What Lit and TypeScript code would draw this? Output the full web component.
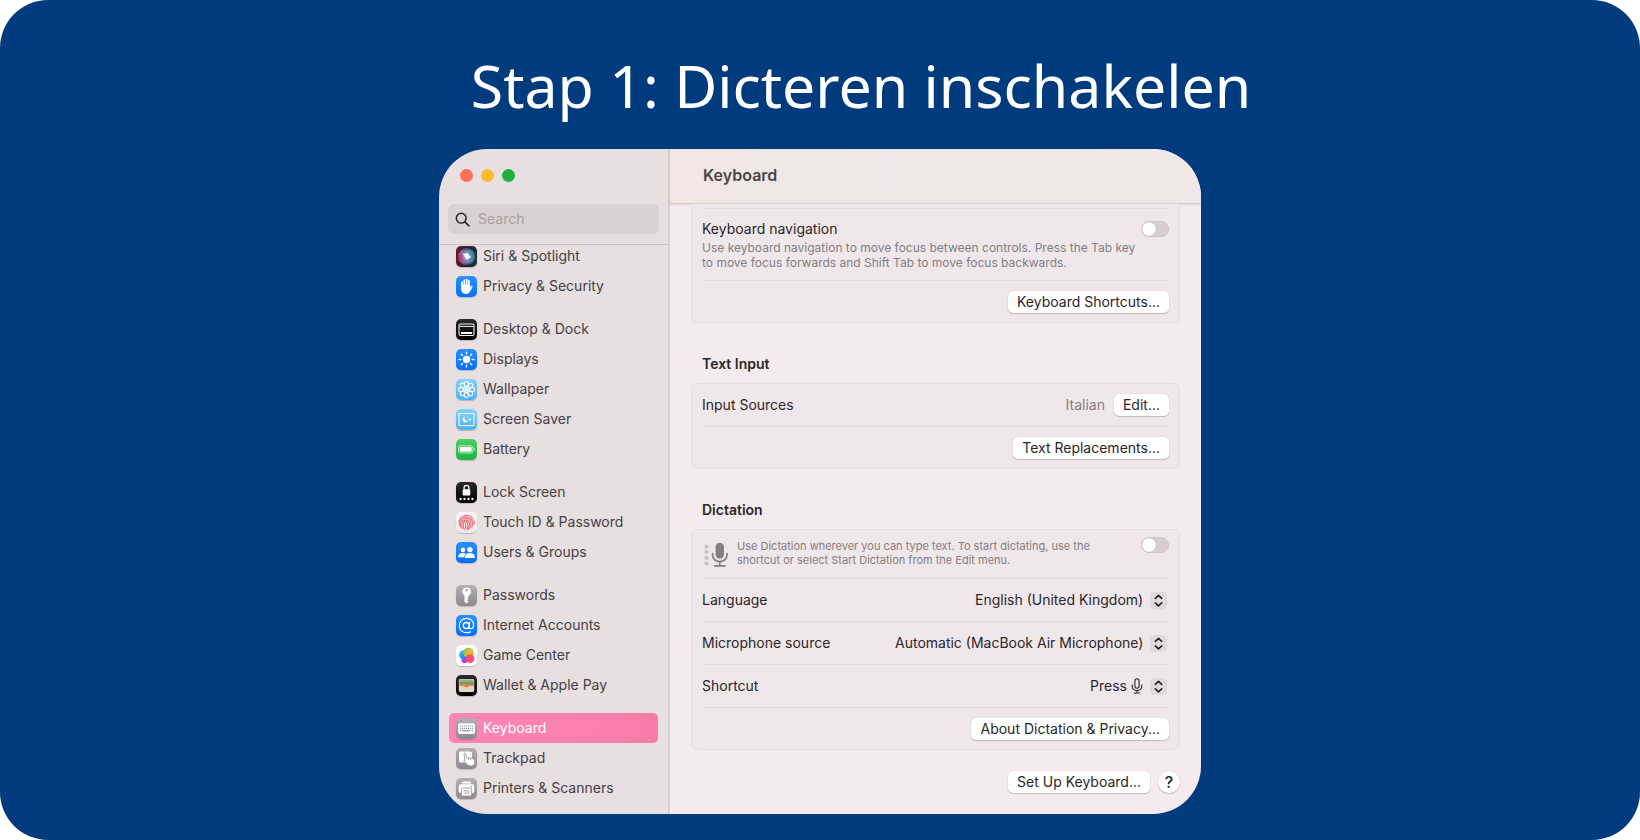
import { LitElement, html, css, svg, nothing } from "lit";
import type { TemplateResult } from "lit";
import { customElement, property, state } from "lit/decorators.js";
import { classMap } from "lit/directives/class-map.js";

type Glyph = TemplateResult;

const petals = [0, 45, 90, 135, 180, 225, 270, 315];
const keyColumns = [0, 1, 2, 3, 4, 5, 6];

const glyphs: Record<string, Glyph> = {
  siri: svg`
    <defs>
      <radialGradient id="orb"><stop offset="0" stop-color="#fff"/><stop offset=".25" stop-color="#b9d6ee"/><stop offset=".6" stop-color="#3b8fac"/><stop offset="1" stop-color="#1d4360"/></radialGradient>
      <linearGradient id="orbTint" x1="0" x2="1" y1=".5" y2=".3"><stop offset="0" stop-color="#e0245f" stop-opacity=".95"/><stop offset=".5" stop-color="#c85aa8" stop-opacity=".2"/><stop offset="1" stop-color="#17a08c" stop-opacity=".7"/></linearGradient>
    </defs>
    <circle cx="10.5" cy="10.5" r="8.6" fill="url(#orb)"/>
    <circle cx="10.5" cy="10.5" r="8.6" fill="url(#orbTint)"/>
    <path d="M3 9c3-4 8-5 14-2M4 14c4 3 9 3 13-1" fill="none" stroke="#5fd0c0" stroke-opacity=".55" stroke-width=".8"/>
    <path d="M6.500 8c3 0 4-1.500 5-.8s.5 1.800 4 4c-3 .6-3.500 2-4.500 2s-1.800-3-4.500-5.200z" fill="#fff" fill-opacity=".9"/>`,
  hand: svg`
    <path d="M6 9.200V6.100M8.300 9V4.200M10.700 9V3.600M13 9.500V4.700" stroke="#fff" stroke-width="1.700" stroke-linecap="round"/>
    <path d="M5.150 8.500h8.700v3l1.200-1.700c.5-.7 1.600-.4 1.500.5-.4 1.600-1.500 3.700-2.500 5.300-.9 1.500-2.100 2.400-4 2.400-3.300 0-4.900-2.200-4.900-5.400z" fill="#fff"/>`,
  dock: svg`
    <rect x="3" y="5" width="15" height="11.500" rx="1.600" fill="none" stroke="#f2f2f2" stroke-width="1.100"/>
    <path d="M3.500 7.400h14" stroke="#f2f2f2" stroke-width="1"/>
    <rect x="5" y="13" width="11" height="2" rx=".4" fill="#fff"/>`,
  sun: svg`
    <circle cx="10.500" cy="10.500" r="3.700" fill="#fff"/>
    ${petals.map((a) => svg`<path d="M10.500 4.800V3.100" stroke="#fff" stroke-width="1.300" stroke-linecap="round" transform="rotate(${a} 10.500 10.500)"/>`)}`,
  flower: svg`
    ${petals.map((a) => svg`<ellipse cx="10.500" cy="5" rx="2.150" ry="2.500" fill="none" stroke="#fff" stroke-width="1.050" transform="rotate(${a} 10.500 10.500)"/>`)}
    ${petals.map((a) => svg`<path d="M10.500 9.300V7.500" stroke="#fff" stroke-width=".8" transform="rotate(${a + 22.5} 10.500 10.500)"/>`)}
    <circle cx="10.500" cy="10.500" r="1.500" fill="#fff"/>`,
  saver: svg`
    <rect x="3" y="4.500" width="15" height="12" rx=".8" fill="none" stroke="#fff" stroke-opacity=".9" stroke-width="1.100"/>
    <path d="M8.600 7.600a3 3 0 1 0 3.700 4.200 3.200 3.200 0 0 1-3.700-4.200z" fill="#fff"/>
    <path d="M13.900 8.500l.5 1.400 1.400.5-1.400.5-.5 1.400-.5-1.400-1.400-.5 1.400-.5z" fill="#fff"/><circle cx="11.600" cy="8.300" r=".6" fill="#fff"/>`,
  battery: svg`
    <rect x="2.500" y="6.800" width="14.500" height="7.200" rx="2.300" fill="none" stroke="#fff" stroke-opacity=".75" stroke-width=".9"/>
    <rect x="3.800" y="8.100" width="11.900" height="4.600" rx="1.300" fill="#fff"/>
    <path d="M17.900 9c1.100.4 1.100 2.400 0 2.800z" fill="#fff" fill-opacity=".85"/>`,
  lock: svg`
    <path d="M8.100 8V5.800a2.400 2.400 0 0 1 4.800 0V8" fill="none" stroke="#fff" stroke-width="1.300"/>
    <rect x="6.700" y="7.300" width="7.600" height="6.300" rx="1.100" fill="#fff"/>
    ${[4.600, 8.500, 12.500, 16.400].map((x) => svg`<circle cx="${x}" cy="17" r="1.150" fill="#fff"/>`)}`,
  finger: svg`
    <g fill="none" stroke="#ec6f7c" stroke-width="1.100" stroke-linecap="round">
      <path d="M4.200 6.500a7.700 7.700 0 0 1 12.600 0M3 9.300c.5-1 1-1.700 1.500-2.100M18 12.500c.3-1.700.2-3.400-.5-4.800"/>
      <path d="M3.400 13.500c-.6-2.800.1-5.400 2-7M6.700 5.900c4.300-2.600 9.600.3 9.900 5 .1 1.800-.2 3-.7 4.200"/>
      <path d="M4.800 15.300c-.7-2.200-.8-4.300.2-6.100C7 5.400 13.200 5.500 14.700 9.800c.6 2.200.2 4.500-.9 6.700"/>
      <path d="M6.400 16.500c-.5-1.600-1-3.400-.6-5.100.7-4.300 7-4.500 7.500 0 .2 2.200-.3 4.200-1.200 6"/>
      <path d="M8.200 17.400c-.7-1.800-1-3.700-1-5.300 0-3.300 4.600-3.300 4.700 0 .1 2-.2 3.800-.9 5.600"/>
      <path d="M9.500 11.600c.3 2.100.2 3.600.2 5"/>
    </g>`,
  users: svg`
    <circle cx="6.900" cy="7.900" r="2.300" fill="#fff"/><path d="M2 15.300c0-2.900 2.100-4.300 4.900-4.300 1.200 0 2.200.3 3 .8-1 .9-1.600 2-1.700 3.500z" fill="#fff"/>
    <circle cx="13.900" cy="7.600" r="2.700" fill="#fff"/><path d="M8.900 15.300c0-2.900 2.100-4.400 5-4.400s5 1.500 5 4.400c0 .5-.2.700-.7.700H9.600c-.5 0-.7-.2-.7-.7z" fill="#fff"/>`,
  key: svg`
    <path fill-rule="evenodd" d="M10.500 2.400a4.200 4.200 0 0 0-2 7.900v6.400l1.900 1.900 2.100-2.100-1.200-1.200 1.300-1.400-1.200-1.300 1.300-1.200v-1.100a4.200 4.200 0 0 0-2.200-7.900zm0 1.600a1.300 1.300 0 1 1 0 2.600 1.300 1.300 0 0 1 0-2.600z" fill="#fff"/>`,
  at: svg`
    <circle cx="10.300" cy="10.500" r="3" fill="none" stroke="#fff" stroke-width="1.300"/>
    <path d="M13.600 7.300l-.5 4.600c-.1 1.100.4 1.800 1.400 1.800 1.700 0 3.100-1.500 3.100-3.800 0-3.800-2.900-6.600-7-6.600-4.300 0-7.300 3-7.300 7.200 0 4.300 3 7.200 7.400 7.200 1.500 0 2.800-.3 3.800-.8" fill="none" stroke="#fff" stroke-width="1.200" stroke-linecap="round"/>`,
  game: svg`
    <defs><linearGradient id="bubble" x1="0" y1="0" x2=".6" y2="1"><stop offset="0" stop-color="#35c8ec"/><stop offset="1" stop-color="#2a7df0"/></linearGradient>
    <linearGradient id="warm" x1="0" y1="0" x2="1" y2="1"><stop offset="0" stop-color="#52c234"/><stop offset=".45" stop-color="#d9bf28"/><stop offset=".8" stop-color="#ff8a1e"/></linearGradient></defs>
    <circle cx="8.500" cy="15" r="3.100" fill="#a93ff0"/>
    <circle cx="7.600" cy="9.700" r="4.500" fill="url(#bubble)"/>
    <circle cx="12.600" cy="7.900" r="5.100" fill="url(#warm)" fill-opacity=".93"/>
    <circle cx="14.100" cy="13.700" r="4.300" fill="#fb3f72" fill-opacity=".93"/>
    <path d="M9.900 12.800a4.300 4.300 0 0 1 3.400-3.300c-.4 1.700-1.500 2.800-3.400 3.300z" fill="#f0652f"/>`,
  wallet: svg`
    <rect x="2.800" y="4" width="15.400" height="13" rx="1.400" fill="#dcd6c9"/>
    <path d="M3.300 4.500h14.400v1.700H3.300z" fill="#98aeb4"/><path d="M3.300 6.200h14.400V8H3.300z" fill="#8f9f3c"/><path d="M3.300 8h14.400v1.700H3.300z" fill="#6e9d48"/>
    <path d="M3.300 9.700h14.400v1.600h-4.200c-.8 0-1.200 1.500-3 1.500s-2.200-1.500-3-1.500H3.300z" fill="#ed7d58"/>
    <path d="M3.300 11h4.100c.8 0 1.300 1.500 3.100 1.500s2.300-1.500 3.100-1.500h4.100v4.900H3.300z" fill="#ddd7cb"/>`,
  keyboard: svg`
    <rect x="2.200" y="5.300" width="16.800" height="10.600" rx="1.700" fill="#fff"/>
    ${[7.500, 9.800].map((y) => keyColumns.map((c) => svg`<rect x="${3.900 + c * 2}" y="${y}" width="1.200" height="1.200" fill="#98949a"/>`))}
    <path d="M3.900 12.700h1.200M6 12.700h8.500M15.900 12.700h1.200" stroke="#98949a" stroke-width="1.200"/>`,
  trackpad: svg`
    <rect x="3" y="3.500" width="13" height="11" rx="1.500" fill="#fff"/>
    <path d="M9 12.100l-1-5.800c-.2-1.200 1.400-1.500 1.700-.4l1 3.800 5.400.6c1.800.3 2.500 1.600 2.700 3.400.2 2.400-1.100 4.300-3.200 4.300-1.800.1-3-.4-4.100-1.400l-3.400-2.900c-.8-.9.100-1.700.9-1.600z" fill="#fff" stroke="#98949a" stroke-width=".9"/>
    <path d="M12.400 10v2M14.600 10.300v2" stroke="#98949a" stroke-width=".6"/>`,
  printer: svg`
    <path d="M5.700 5.500c0-1.300.5-2 1.700-2h6.200c1.200 0 1.700.7 1.700 2z" fill="#fff"/>
    <rect x="2.800" y="6.300" width="15.400" height="8.700" rx="1.700" fill="#fff"/>
    <circle cx="15.500" cy="8.600" r=".8" fill="#98949a"/>
    <rect x="5.400" y="10" width="10.200" height="8" rx="1.200" fill="#fff" stroke="#98949a" stroke-width=".9"/>
    <path d="M7.500 12.900h6M7.500 15.100h6" stroke="#98949a" stroke-width=".9"/>`,
};

interface Pane {
  name: string;
  glyph: string;
  tone: string;
}

const paneGroups: Pane[][] = [
  [
    { name: "Siri & Spotlight", glyph: "siri", tone: "night" },
    { name: "Privacy & Security", glyph: "hand", tone: "blue" },
  ],
  [
    { name: "Desktop & Dock", glyph: "dock", tone: "black" },
    { name: "Displays", glyph: "sun", tone: "blue" },
    { name: "Wallpaper", glyph: "flower", tone: "sky" },
    { name: "Screen Saver", glyph: "saver", tone: "sky" },
    { name: "Battery", glyph: "battery", tone: "green" },
  ],
  [
    { name: "Lock Screen", glyph: "lock", tone: "black" },
    { name: "Touch ID & Password", glyph: "finger", tone: "paper" },
    { name: "Users & Groups", glyph: "users", tone: "blue" },
  ],
  [
    { name: "Passwords", glyph: "key", tone: "grey" },
    { name: "Internet Accounts", glyph: "at", tone: "blue" },
    { name: "Game Center", glyph: "game", tone: "white" },
    { name: "Wallet & Apple Pay", glyph: "wallet", tone: "black" },
  ],
  [
    { name: "Keyboard", glyph: "keyboard", tone: "grey" },
    { name: "Trackpad", glyph: "trackpad", tone: "grey" },
    { name: "Printers & Scanners", glyph: "printer", tone: "grey" },
  ],
];

@customElement("settings-sidebar")
export class SettingsSidebar extends LitElement {
  @state() private current = "Keyboard";

  static styles = css`
    :host {
      display: flex;
      flex-direction: column;
      background: #e7dfe0;
      border-right: 2px solid #d9d0d2;
      font: 14px/20px Inter, "Liberation Sans", sans-serif;
      color: #464144;
    }
    .lights {
      display: flex;
      gap: 8px;
      padding: 20px 21px 22px;
    }
    .light {
      width: 13px;
      height: 13px;
      padding: 0;
      border: 0;
      border-radius: 50%;
    }
    .close { background: #ff6f59; }
    .minimise { background: #ffba2c; }
    .zoom { background: #20b040; }
    .search {
      display: flex;
      align-items: center;
      gap: 8px;
      height: 30px;
      margin: 0 9px 10px;
      padding: 0 7px;
      border-radius: 6px;
      background: #dad1d3;
    }
    .search svg { flex: none; }
    .search input {
      flex: 1;
      min-width: 0;
      padding: 0;
      border: 0;
      outline: 0;
      background: none;
      font: inherit;
      color: inherit;
    }
    .search input::placeholder { color: #a79fa2; opacity: 1; }
    .list {
      flex: 1;
      overflow: hidden;
      padding: 0 10px 10px;
      border-top: 1px solid #cdc4c6;
    }
    .group {
      margin: 0 0 13px;
      padding: 0;
      list-style: none;
    }
    .group:first-child { margin-top: -4px; }
    .group:last-child { margin-bottom: 0; }
    .pane {
      display: flex;
      align-items: center;
      gap: 6px;
      height: 30px;
      padding: 0 7px;
      border-radius: 5px;
      color: inherit;
      text-decoration: none;
      white-space: nowrap;
    }
    .pane.current {
      background: linear-gradient(100deg, #ff86b3, #f77da9);
      color: #fff;
    }
    .tile {
      flex: none;
      display: block;
      width: 21px;
      height: 21px;
      border-radius: 5px;
      box-shadow: 0 1px 1px rgba(0, 0, 0, 0.18);
    }
    .night { background: linear-gradient(100deg, #6b1636, #26202f 55%, #123b40); }
    .blue { background: linear-gradient(#2a90ff, #0070fb); }
    .black { background: linear-gradient(#2a2a2c, #000); }
    .sky { background: linear-gradient(#83d3fb, #4fb2ee); }
    .green { background: linear-gradient(#50cf66, #1fb23d); }
    .paper { background: linear-gradient(#fbf7f7, #ece6e7); }
    .white { background: #fff; }
    .grey { background: linear-gradient(#b3afb4, #8d898f); }
  `;

  render() {
    return html`
      <div class="lights">
        <button class="light close" aria-label="Close"></button>
        <button class="light minimise" aria-label="Minimise"></button>
        <button class="light zoom" aria-label="Zoom"></button>
      </div>
      <label class="search">
        <svg width="15" height="15" viewBox="0 0 15 15" fill="none" stroke="#262326" stroke-width="1.500" stroke-linecap="round" aria-hidden="true">
          <circle cx="6.200" cy="6.200" r="4.900" /><path d="M9.900 9.900l4 4" />
        </svg>
        <input type="search" placeholder="Search" aria-label="Search" />
      </label>
      <nav class="list">
        ${paneGroups.map(
          (group) => html`<ul class="group">
            ${group.map(
              (pane) => html`<li>
                <a
                  class=${classMap({ pane: true, current: pane.name === this.current })}
                  href="#"
                  aria-current=${pane.name === this.current ? "page" : nothing}
                  @click=${(e: Event) => {
                    e.preventDefault();
                    this.current = pane.name;
                  }}
                >
                  <svg class="tile ${pane.tone}" viewBox="0 0 21 21" fill="none" aria-hidden="true">${glyphs[pane.glyph]}</svg>
                  <span>${pane.name}</span>
                </a>
              </li>`
            )}
          </ul>`
        )}
      </nav>
    `;
  }
}

@customElement("popup-select")
export class PopupSelect extends LitElement {
  @property() name = "";
  @property() value = "";
  @property({ type: Boolean }) mic = false;

  static styles = css`
    :host { display: block; width: 100%; }
    .field {
      display: flex;
      align-items: center;
      justify-content: space-between;
    }
    .choice {
      display: grid;
      align-items: center;
      padding-right: 2px;
    }
    select {
      grid-area: 1 / 1;
      appearance: none;
      padding: 0 23px 0 0;
      border: 0;
      background: none;
      font: inherit;
      color: inherit;
    }
    .mic select { padding-right: 40px; }
    .marks {
      grid-area: 1 / 1;
      justify-self: end;
      display: flex;
      align-items: center;
      gap: 7px;
      pointer-events: none;
    }
    .stepper {
      display: block;
      border-radius: 4px;
      background: #e2d9dd;
    }
  `;

  render() {
    return html`
      <div class="field">
        <label for="choice">${this.name}</label>
        <div class=${classMap({ choice: true, mic: this.mic })}>
          <select id="choice"><option>${this.value}</option></select>
          <span class="marks">
            ${this.mic
              ? html`<svg width="12" height="16" viewBox="0 0 12 16" fill="none" stroke="#2a2629" stroke-width="1.100" stroke-linecap="round" aria-hidden="true">
                  <rect x="3.900" y=".8" width="4.200" height="9.400" rx="2.100" /><path d="M1.200 6.800v1.400a4.800 4.300 0 0 0 9.600 0V6.800M6 12.500v2.500M3.300 15h5.400" />
                </svg>`
              : nothing}
            <svg class="stepper" width="17" height="17" viewBox="0 0 17 17" fill="none" stroke="#262326" stroke-width="1.600" stroke-linecap="round" stroke-linejoin="round" aria-hidden="true">
              <path d="M5.300 6.300l3.200-3 3.200 3M5.300 10.900l3.200 3 3.200-3" />
            </svg>
          </span>
        </div>
      </div>
    `;
  }
}

@customElement("keyboard-pane")
export class KeyboardPane extends LitElement {
  static styles = css`
    :host {
      display: flex;
      flex-direction: column;
      min-width: 0;
      background: #f5ebef;
      font: 14px/20px Inter, "Liberation Sans", sans-serif;
      color: #2a2629;
    }
    .toolbar {
      padding: 16px 33px 18px;
      border-bottom: 1px solid #d8cdcf;
      box-shadow: 0 1px 2px rgba(90, 60, 70, 0.12);
      background: linear-gradient(100deg, #f2e7e4, #efe6e7 40%, #f0e7e6);
    }
    .toolbar h2 {
      margin: 0;
      font-size: 16px;
      line-height: 20px;
      font-weight: 600;
      color: #4a4447;
    }
    .content { padding: 0 21px 21px; }
    .card {
      border: 1px solid #e8dee2;
      border-radius: 6px;
      background: #f0e7eb;
      padding: 0 10px;
    }
    .card.scrolled {
      border-top: 0;
      border-radius: 0 0 6px 6px;
      padding-top: 4px;
    }
    .heading {
      margin: 0;
      padding: 31px 11px 9px;
      font-size: 14px;
      line-height: 20px;
      font-weight: 600;
    }
    .row {
      box-sizing: border-box;
      display: flex;
      align-items: center;
      gap: 9px;
      min-height: 43px;
      border-bottom: 1px solid #e6dce0;
    }
    .scrolled .row:first-child { border-top: 1px solid #e6dce0; }
    .row:last-child { border-bottom: 0; min-height: 41px; }
    .end { justify-content: flex-end; }
    .grow { flex: 1; min-width: 0; }
    .top { align-items: flex-start; }
    .tall { padding: 10px 0; gap: 0; }
    .hint { padding: 7px 0 10px; }
    .note {
      margin: 0;
      color: #857d81;
    }
    .tall .note { margin-top: 1px; font-size: 12px; line-height: 15px; }
    .hint .note { font-size: 11px; line-height: 14px; padding-top: 2px; }
    .soft { color: #857d81; }
    .speech { flex: none; margin: 5px 0 0 2px; }
    button {
      height: 22px;
      padding: 0 9px;
      border: 0;
      border-radius: 5px;
      background: #fff;
      box-shadow: 0 0 1px rgba(60, 40, 50, 0.3), 0 1px 1px rgba(60, 40, 50, 0.22);
      font: inherit;
      color: inherit;
      white-space: nowrap;
    }
    .switch {
      appearance: none;
      box-sizing: border-box;
      flex: none;
      display: flex;
      width: 28px;
      height: 16px;
      margin: 0;
      border: 1px solid #cfc5c9;
      border-radius: 8px;
      background: #d8ced2;
    }
    .switch::before {
      content: "";
      width: 14px;
      height: 14px;
      border-radius: 50%;
      background: #fff;
      box-shadow: 0 0 1px rgba(0, 0, 0, 0.35);
    }
    .switch:checked { background: #f77da9; justify-content: flex-end; }
    .option {
      display: flex;
      align-items: center;
      justify-content: space-between;
    }
    .footer {
      display: flex;
      justify-content: flex-end;
      gap: 8px;
      padding-top: 21px;
    }
    .help {
      width: 22px;
      padding: 0;
      border-radius: 50%;
      font-size: 16px;
      font-weight: 500;
    }
  `;

  render() {
    return html`
      <header class="toolbar"><h2>Keyboard</h2></header>
      <div class="content">
        <section class="card scrolled">
          <div class="row top tall">
            <div class="grow">
              <div class="option">
                <label for="nav">Keyboard navigation</label>
                <input class="switch" id="nav" type="checkbox" role="switch" />
              </div>
              <p class="note">
                Use keyboard navigation to move focus between controls. Press the Tab key<br />to move focus forwards and Shift Tab to move focus backwards.
              </p>
            </div>
          </div>
          <div class="row end"><button>Keyboard Shortcuts...</button></div>
        </section>

        <h3 class="heading">Text Input</h3>
        <section class="card">
          <div class="row">
            <span class="grow">Input Sources</span>
            <span class="soft">Italian</span>
            <button>Edit...</button>
          </div>
          <div class="row end"><button>Text Replacements...</button></div>
        </section>

        <h3 class="heading">Dictation</h3>
        <section class="card">
          <div class="row top hint">
            <svg class="speech" width="24" height="26" viewBox="0 0 24 26" fill="none" aria-hidden="true">
              ${[4.500, 10, 15.800, 21.500].map((y) => svg`<circle cx="2.500" cy="${y}" r="2.100" fill="#cbc2c6"/>`)}
              <rect x="11.600" y=".8" width="8.400" height="16" rx="4.200" fill="#857d81" />
              <path d="M8.600 11.500v1.800a7.200 6.300 0 0 0 14.400 0v-1.800M15.800 19.700v3.600M10.700 23.800h10.200" stroke="#857d81" stroke-width="1.700" stroke-linecap="round" />
            </svg>
            <label class="note grow" for="dictation">
              Use Dictation wherever you can type text. To start dictating, use the<br />shortcut or select Start Dictation from the Edit menu.
            </label>
            <input class="switch" id="dictation" type="checkbox" role="switch" />
          </div>
          <div class="row"><popup-select name="Language" value="English (United Kingdom)"></popup-select></div>
          <div class="row"><popup-select name="Microphone source" value="Automatic (MacBook Air Microphone)"></popup-select></div>
          <div class="row"><popup-select name="Shortcut" value="Press" mic></popup-select></div>
          <div class="row end"><button>About Dictation &amp; Privacy...</button></div>
        </section>

        <footer class="footer">
          <button>Set Up Keyboard...</button>
          <button class="help" aria-label="Help">?</button>
        </footer>
      </div>
    `;
  }
}

@customElement("app-root")
export class AppRoot extends LitElement {
  static styles = css`
    :host {
      display: block;
      background: #fff;
    }
    .stage {
      box-sizing: border-box;
      min-height: 100vh;
      display: flex;
      flex-direction: column;
      align-items: center;
      padding: 45px 24px 26px;
      border-radius: 48px;
      background: #003b7d;
    }
    .title {
      margin: 0 0 24px;
      padding-left: 82px;
      font: 400 59px/80px "Noto Sans", "Open Sans", sans-serif;
      color: #fff;
      text-align: center;
    }
    .window {
      display: grid;
      grid-template-columns: 231px minmax(0, 1fr);
      width: 100%;
      max-width: 762px;
      overflow: hidden;
      border-radius: 48px;
    }
  `;

  render() {
    return html`
      <main class="stage">
        <h1 class="title">Stap 1: Dicteren inschakelen</h1>
        <div class="window">
          <settings-sidebar></settings-sidebar>
          <keyboard-pane></keyboard-pane>
        </div>
      </main>
    `;
  }
}
